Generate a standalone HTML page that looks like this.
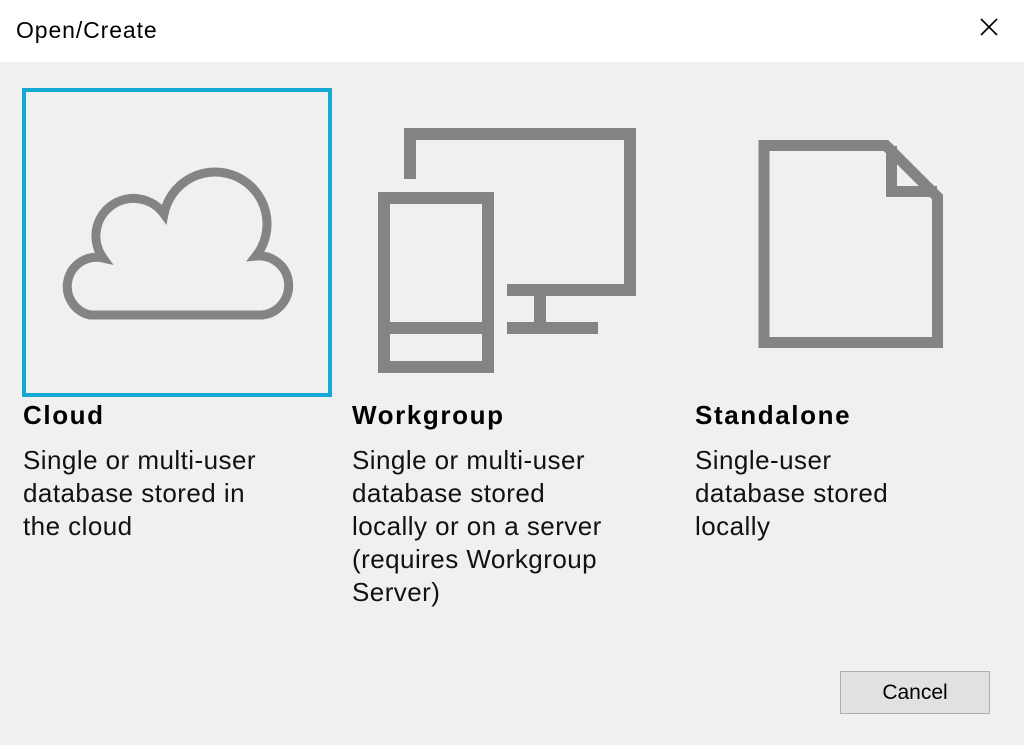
<!DOCTYPE html>
<html><head><style>
body{margin:0;width:1024px;height:745px;background:#f0f0f0;font-family:"Liberation Sans",sans-serif;position:relative;overflow:hidden}
.hdr{position:absolute;left:0;top:0;width:1024px;height:62px;background:#fff}
.title{position:absolute;left:16px;top:17px;font-size:23px;letter-spacing:0.9px;color:#000}
.x{position:absolute;left:978px;top:16px}
.h{position:absolute;top:400px;font-size:26px;font-weight:bold;letter-spacing:1.6px;color:#000}
.b{position:absolute;top:444px;font-size:26px;line-height:33px;letter-spacing:0.45px;color:#111}
.btn{position:absolute;left:840px;top:671px;width:148px;height:41px;border:1px solid #adadad;background:#e1e1e1;font-size:21px;text-align:center;line-height:41px;color:#000}
</style></head><body>
<div class="hdr"></div>
<div class="title">Open/Create</div>
<svg class="x" width="22" height="22"><path d="M3 3L19 19M19 3L3 19" stroke="#000" stroke-width="1.6"/></svg>
<svg style="position:absolute;left:0;top:0" width="1024" height="420">
<rect x="24" y="90" width="306" height="305" fill="none" stroke="#14a9d4" stroke-width="4"/>
<path d="M90 315 H262 A29 29 0 0 0 256 256 A52 52 0 1 0 164 214 A37 37 0 0 0 103 258 A29 29 0 0 0 90 315 Z" fill="none" stroke="#848484" stroke-width="9"/>
<g fill="none" stroke="#848484" stroke-width="12">
<path d="M410 179 V134 H630 V290 H507"/>
<rect x="384" y="198" width="104" height="169"/>
<path d="M384 328 H488"/>
<path d="M540 290 V328 M507 328 H598"/>
</g>
<path d="M764 145.5 H886 L937.5 197 V342.5 H764 Z M891.5 146 V191.5 H937" fill="none" stroke="#848484" stroke-width="11"/>
</svg>
<div class="h" style="left:23px">Cloud</div>
<div class="b" style="left:23px">Single or multi-user<br>database stored in<br>the cloud</div>
<div class="h" style="left:352px">Workgroup</div>
<div class="b" style="left:352px">Single or multi-user<br>database stored<br>locally or on a server<br>(requires Workgroup<br>Server)</div>
<div class="h" style="left:695px">Standalone</div>
<div class="b" style="left:695px">Single-user<br>database stored<br>locally</div>
<div class="btn">Cancel</div>
</body></html>
